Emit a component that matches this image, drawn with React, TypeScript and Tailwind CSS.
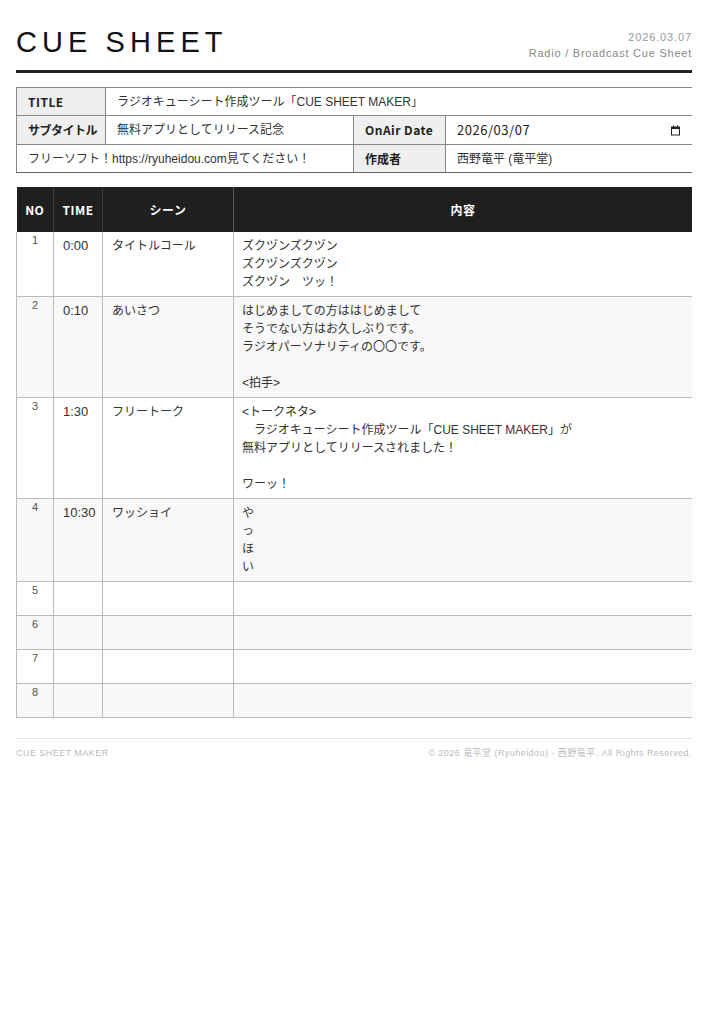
import React from 'react';

type Cue = { no: number; time: string; scene: string; body: string };

const cues: Cue[] = [
  { no: 1, time: '0:00', scene: 'タイトルコール', body: 'ズクヅンズクヅン\nズクヅンズクヅン\nズクヅン　ツッ！' },
  {
    no: 2,
    time: '0:10',
    scene: 'あいさつ',
    body: 'はじめましての方ははじめまして\nそうでない方はお久しぶりです。\nラジオパーソナリティの〇〇です。\n\n<拍手>',
  },
  {
    no: 3,
    time: '1:30',
    scene: 'フリートーク',
    body: '<トークネタ>\n　ラジオキューシート作成ツール「CUE SHEET MAKER」が\n無料アプリとしてリリースされました！\n\nワーッ！',
  },
  { no: 4, time: '10:30', scene: 'ワッショイ', body: 'や\nっ\nほ\nい' },
  { no: 5, time: '', scene: '', body: '' },
  { no: 6, time: '', scene: '', body: '' },
  { no: 7, time: '', scene: '', body: '' },
  { no: 8, time: '', scene: '', body: '' },
];

const label =
  "flex items-center px-[11px] whitespace-nowrap bg-[#efefef] border-l border-t border-[#888] text-[12px] font-bold text-[#222] font-['Noto_Sans_CJK_JP',sans-serif]";
const value = 'flex items-center px-[11px] bg-white border-l border-t border-[#888] text-[12px] text-[#333]';

function CalendarIcon() {
  return (
    <svg width="11" height="11" viewBox="0 0 11 11" fill="none">
      <rect x="1.5" y="2" width="8" height="8" stroke="#222" strokeWidth="1" />
      <rect x="1.5" y="2" width="8" height="2" fill="#222" />
      <rect x="3" y="0.5" width="1" height="2" fill="#222" />
      <rect x="7" y="0.5" width="1" height="2" fill="#222" />
    </svg>
  );
}

export default function App() {
  return (
    <div className="min-h-screen bg-white px-4 pt-[28px] font-['Liberation_Sans','Noto_Sans_CJK_JP',sans-serif] text-[#333]">
      {/* header */}
      <header className="flex items-end justify-between pb-[9px] border-b-[3px] border-[#222]">
        <h1 className="pb-[4px] text-[29px] leading-none tracking-[0.175em] text-[#111] font-normal">CUE SHEET</h1>
        <div className="text-right text-[11px] leading-[16px]">
          <div className="tracking-[0.08em] text-[#999]">2026.03.07</div>
          <div className="tracking-[0.07em] text-[#888]">Radio / Broadcast Cue Sheet</div>
        </div>
      </header>

      {/* info */}
      <div className="mt-[14px] grid grid-cols-[89px_248px_92px_1fr] border-b border-[#666]">
        <div className={label + ' h-[28px] tracking-[0.04em]'}>TITLE</div>
        <div className={value + ' col-span-3 h-[28px]'}>ラジオキューシート作成ツール「CUE SHEET MAKER」</div>

        <div className={label + ' h-[29px] tracking-[-0.04em]'}>サブタイトル</div>
        <div className={value + ' h-[29px]'}>無料アプリとしてリリース記念</div>
        <div className={label + ' h-[29px] tracking-[0.04em]'}>OnAir Date</div>
        <div className={value + ' h-[29px] justify-between pr-[11px]'}>
          <span className="text-[13px] tracking-[0.04em] text-[#222] font-['Noto_Sans_CJK_JP',sans-serif]">2026/03/07</span>
          <CalendarIcon />
        </div>

        <div className={value + ' col-span-2 h-[28px]'}>フリーソフト！https://ryuheidou.com見てください！</div>
        <div className={label + ' h-[28px]'}>作成者</div>
        <div className={value + ' h-[28px]'}>西野竜平 (竜平堂)</div>
      </div>

      {/* cue table */}
      <table className="mt-[14px] w-full table-fixed border-collapse">
        <colgroup>
          <col className="w-[37px]" />
          <col className="w-[49px]" />
          <col className="w-[131px]" />
          <col />
        </colgroup>
        <thead>
          <tr className="h-[45px] bg-[#1f1f1f] text-white text-[12px] font-bold tracking-[0.04em] font-['Noto_Sans_CJK_JP',sans-serif]">
            <th className="border-r border-[#3a3a3a] font-bold">NO</th>
            <th className="border-r border-[#3a3a3a] font-bold">TIME</th>
            <th className="border-r border-[#555] font-bold">シーン</th>
            <th className="font-bold">内容</th>
          </tr>
        </thead>
        <tbody>
          {cues.map((c, i) => (
            <tr key={c.no} className={i % 2 === 1 ? 'h-[34px] bg-[#f8f8f8]' : 'h-[34px] bg-white'}>
              <td className="align-top border-l border-r border-b border-[#bbb] pt-[1px] text-center text-[11px] leading-[14px] text-[#555]">
                {c.no}
              </td>
              <td className="align-top border-r border-b border-[#bbb] px-[9px] py-[5px] text-[13px] leading-[18px] text-[#333]">
                {c.time}
              </td>
              <td className="align-top border-r border-b border-[#bbb] px-[9px] py-[5px] text-[12px] leading-[18px] text-[#333]">
                {c.scene}
              </td>
              <td className="align-top border-b border-[#bbb] px-[8px] py-[5px] text-[12px] leading-[18px] text-[#333] whitespace-pre-wrap">
                {c.body}
              </td>
            </tr>
          ))}
        </tbody>
      </table>

      {/* footer */}
      <footer className="mt-[20px] flex justify-between border-t border-[#e5e5e5] pt-[8px] text-[9px] tracking-[0.05em] text-[#bbb]">
        <span>CUE SHEET MAKER</span>
        <span>© 2026 竜平堂 (Ryuheidou) - 西野竜平. All Rights Reserved.</span>
      </footer>
    </div>
  );
}
